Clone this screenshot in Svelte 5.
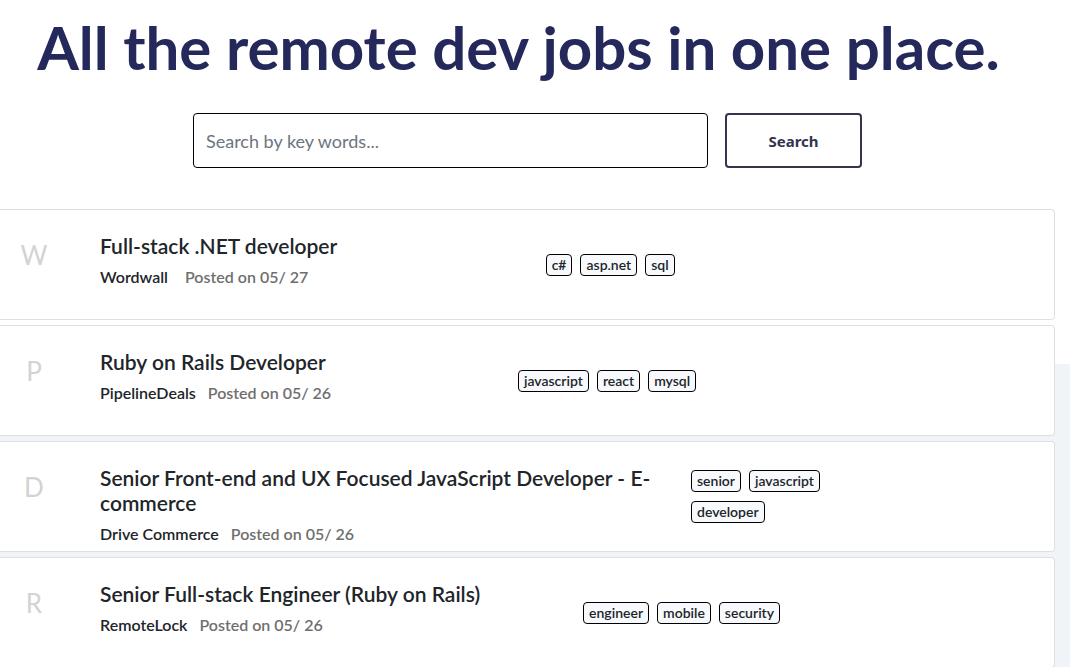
<script lang="ts">
  interface Job {
    title: string;
    company: string;
    posted: string;
    tags: string[];
  }

  let keywords = $state('');

  const jobs: Job[] = [
    { title: 'Full-stack .NET developer', company: 'Wordwall', posted: '05/ 27', tags: ['c#', 'asp.net', 'sql'] },
    { title: 'Ruby on Rails Developer', company: 'PipelineDeals', posted: '05/ 26', tags: ['javascript', 'react', 'mysql'] },
    { title: 'Senior Front-end and UX Focused JavaScript Developer - E-commerce', company: 'Drive Commerce', posted: '05/ 26', tags: ['senior', 'javascript', 'developer'] },
    { title: 'Senior Full-stack Engineer (Ruby on Rails)', company: 'RemoteLock', posted: '05/ 26', tags: ['engineer', 'mobile', 'security'] },
  ];
</script>

<main class="page">
  <header class="hero">
    <h1>All the remote dev jobs in one place.</h1>
    <form class="search" onsubmit={(e) => e.preventDefault()}>
      <input type="text" placeholder="Search by key words..." aria-label="Search by key words" bind:value={keywords} />
      <button type="submit">Search</button>
    </form>
  </header>

  <ul class="jobs">
    {#each jobs as job}
      <li class="job">
        <div class="initial">{job.company[0]}</div>
        <div class="info">
          <h2>{job.title}</h2>
          <p>
            <span class="company">{job.company}</span>
            <span class="posted">Posted on {job.posted}</span>
          </p>
        </div>
        <div class="tags">
          {#each job.tags as tag}
            <span class="tag">{tag}</span>
          {/each}
        </div>
      </li>
    {/each}
  </ul>
</main>

<style>
  :global(body) {
    margin: 0;
    background: #f0f4f8;
    overflow: hidden;
  }

  .page {
    font-family: Lato, sans-serif;
    color: #212529;
    background: linear-gradient(#fff 364px, #f0f4f8 364px);
  }

  .hero {
    padding: 11px 15px 41px 0;
  }

  h1 {
    margin: 0 0 30px;
    padding-right: 18px;
    color: #24285b;
    font-size: 60px;
    line-height: 72px;
    font-weight: 700;
    text-align: center;
  }

  .search {
    display: flex;
    justify-content: center;
    gap: 17px;
  }

  .search input {
    box-sizing: border-box;
    width: 515px;
    height: 55px;
    padding: 6px 12px;
    border: 1px solid #000;
    border-radius: 4px;
    background: #fff;
    font-family: inherit;
    font-size: 18px;
    color: #495057;
  }

  .search input::placeholder {
    color: #6c757d;
  }

  .search button {
    width: 137px;
    border: 2px solid #34344e;
    border-radius: 4px;
    background: #fff;
    color: #34344e;
    font-family: "Noto Sans", sans-serif;
    font-size: 15px;
    font-weight: 700;
    cursor: pointer;
  }

  .jobs {
    list-style: none;
    margin: 0;
    padding: 0 15px 0 0;
    display: flex;
    flex-direction: column;
    gap: 5px;
  }

  .job {
    box-sizing: border-box;
    min-height: 111px;
    display: flex;
    padding-right: 163px;
    border: 1px solid #dfdfdf;
    border-left: none;
    border-radius: 0 4px 4px 0;
    background: #fff;
  }

  .initial {
    flex: none;
    width: 68px;
    margin-right: 32px;
    padding-top: 29px;
    color: #d3d3d3;
    font-size: 26px;
    line-height: 32px;
    font-weight: 400;
    text-align: center;
  }

  .info {
    flex-shrink: 0;
    max-width: 591px;
    padding-top: 23px;
  }

  h2 {
    margin: 0 0 7px;
    font-size: 21px;
    line-height: 25px;
    font-weight: 600;
  }

  p {
    display: flex;
    gap: 12px;
    margin: 0;
    font-size: 16px;
    line-height: 24px;
    font-weight: 600;
  }

  .company {
    min-width: 73px;
  }

  .posted {
    color: #6f6f6f;
  }

  .tags {
    display: flex;
    flex-wrap: wrap;
    align-self: center;
    gap: 9px 8px;
    margin: 0 auto;
    padding-right: 8px;
  }

  .tag {
    box-sizing: border-box;
    height: 22px;
    padding: 0 5px;
    border: 1px solid #000;
    border-radius: 4px;
    background: #f8f9fc;
    font-size: 14px;
    line-height: 20px;
    font-weight: 600;
  }
</style>
